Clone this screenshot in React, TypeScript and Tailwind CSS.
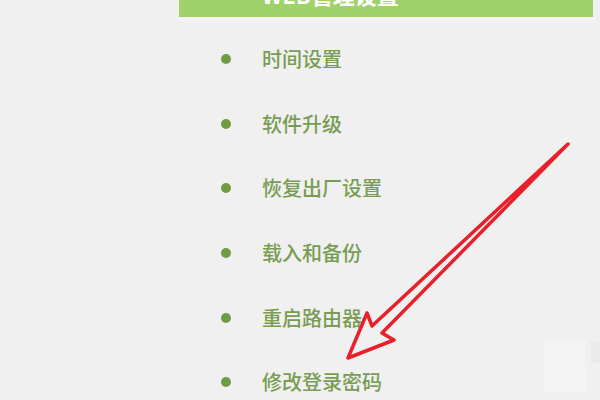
import React from "react";

const items = ["时间设置", "软件升级", "恢复出厂设置", "载入和备份", "重启路由器", "修改登录密码"];

export default function App() {
  return (
    <div
      className="relative w-[600px] h-[400px] overflow-hidden bg-[#f0f0f0]"
      style={{ fontFamily: '"Noto Sans CJK SC", "Noto Sans", sans-serif' }}
    >
      <div className="ml-[179px] w-[414px] h-[17px] overflow-hidden bg-[#9fd36a]">
        <div className="-mt-[17px] pl-[83px] text-[22px] leading-[22px] font-bold text-white">WEB管理设置</div>
      </div>
      <div className="ml-[177px] w-[418px] h-[5px] bg-[#f4f2f7]" />
      <div className="flex flex-col mt-[5px]">
        {items.map((t) => (
          <div key={t} className="flex items-center h-[64.6px] pl-[221px]">
            <div className="w-[10px] h-[10px] rounded-full bg-[#6e9c44]" />
            <div className="ml-[31px] text-[20px] leading-[24px] font-medium text-[#789d52]">{t}</div>
          </div>
        ))}
      </div>
      <div className="absolute left-[544px] top-[340px] w-[42px] h-[52px] bg-[#f3f3f3]" />
      <div className="absolute left-[591px] top-[342px] w-[9px] h-[21px] bg-[#ebebeb]" />
      <svg className="absolute left-0 top-0" width="600" height="400" viewBox="0 0 600 400">
        <path
          d="M568,144 L372,326 L367,313 L348,358 L394,340 L382,333 Z"
          fill="none"
          stroke="#e8202a"
          strokeWidth="3.5"
          strokeLinejoin="round"
          strokeLinecap="round"
        />
      </svg>
    </div>
  );
}
